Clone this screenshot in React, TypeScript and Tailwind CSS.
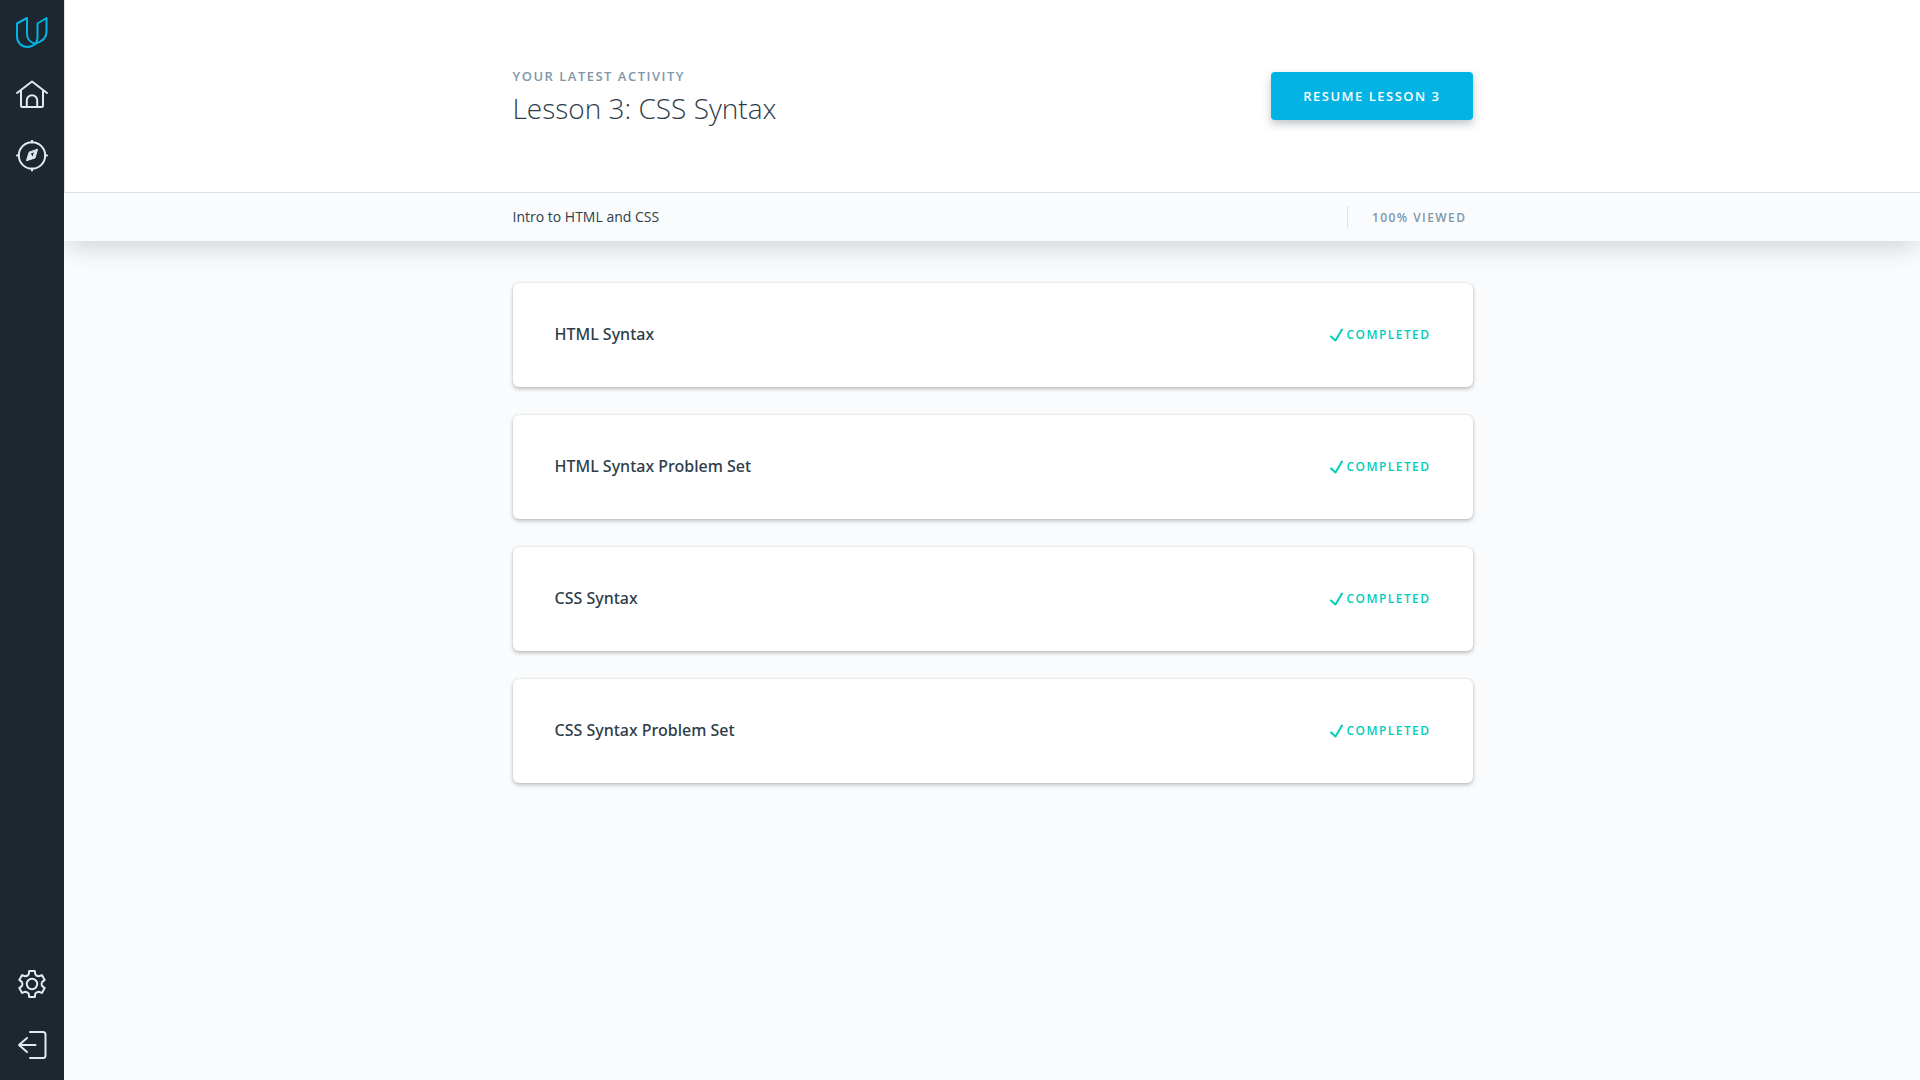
import type { ReactNode } from "react";

const lessons = [
  "HTML Syntax",
  "HTML Syntax Problem Set",
  "CSS Syntax",
  "CSS Syntax Problem Set",
];

function NavIcon({ label, children }: { label: string; children: ReactNode }) {
  return (
    <a href="#" aria-label={label} className="flex size-8 items-center justify-center text-[#e3e9ec]">
      <svg viewBox="0 0 32 32" className="size-8" fill="none" stroke="currentColor" strokeWidth="2" strokeLinecap="round" strokeLinejoin="round" aria-hidden="true">
        {children}
      </svg>
    </a>
  );
}

function Logo() {
  return (
    <a href="#" aria-label="Udacity" className="flex size-8 items-center justify-center text-[#02b3e4]">
      <svg viewBox="0 0 32 32" className="size-8" fill="none" stroke="currentColor" strokeWidth="2" strokeLinejoin="round" aria-hidden="true">
        <path d="M11 2 1 7.500V20.500c0 6 4.500 10.500 10.500 10.500 3.200 0 5.800-1.200 8-3.200C14.500 26.800 11 23 11 18Z" />
        <path d="M21.500 7.500 30.500 2V16c0 5.500-3.500 9.300-11 11.800 1.200-1.700 2-4 2-6.500Z" />
      </svg>
    </a>
  );
}

function Sidebar() {
  return (
    <nav aria-label="Main" className="relative z-10 flex w-16 shrink-0 flex-col items-center justify-between bg-[#1d272f] pt-4 pb-[19px]">
      <div className="flex flex-col gap-[30px]">
        <Logo />
        <NavIcon label="Home">
          <path d="M1 15 16 3.500 31 15" />
          <path d="M5 13v14.500c0 1 .5 1.500 1.500 1.500h19c1 0 1.500-.5 1.500-1.500V13" />
          <path d="M10.800 29v-6.500a5.200 5.200 0 0 1 10.400 0V29" />
        </NavIcon>
        <NavIcon label="Catalog">
          <circle cx="16" cy="15.500" r="13.200" />
          <path d="M16 .5v2M16 28.500v2M1 15.500h2M29 15.500h2" />
          <path fill="currentColor" fillRule="evenodd" strokeWidth="1" d="M21.500 9.500 19 18l-8.500 2.700 2.500-8.200Zm-7.200 4.200 2.400 3.600 2-5.600Z" />
        </NavIcon>
      </div>
      <div className="flex flex-col gap-[29px]">
        <NavIcon label="Settings">
          <circle cx="16" cy="16" r="5.200" />
          <path d="M13.200 3H18.800L19.300 6.400Q20.500 8.200 22.700 8.300L25.900 7.100 28.700 11.900 26 14.100Q25 16 26 17.900L28.700 20.100 25.900 24.900 22.700 23.700Q20.500 23.800 19.300 25.600L18.800 29H13.200L12.700 25.600Q11.500 23.800 9.300 23.700L6.100 24.900 3.300 20.100 6 17.900Q7 16 6 14.100L3.300 11.900 6.100 7.100 9.300 8.300Q11.500 8.200 12.700 6.400Z" />
        </NavIcon>
        <NavIcon label="Sign out">
          <path d="M14 3h13c1.600 0 2.500.9 2.500 2.500v21c0 1.600-.9 2.500-2.500 2.500H14" />
          <path d="M19.500 16H3M11 9l-8 7 8 7" />
        </NavIcon>
      </div>
    </nav>
  );
}

function LessonCard({ title }: { title: string }) {
  return (
    <li className="flex h-[104px] items-center justify-between rounded-md bg-white px-[42px] shadow-[0_2px_4px_rgba(0,0,0,0.24),0_0_2px_rgba(0,0,0,0.12)]">
      <h2 className="pb-0.5 font-['Noto_Sans','Open_Sans',sans-serif] text-base leading-6 font-medium text-[#2e3d49]">{title}</h2>
      <p className="flex items-center gap-1 text-xs leading-6 font-semibold tracking-[0.12em] text-[#02ccba]">
        <svg viewBox="0 0 13 14" className="h-3.5 w-[13px]" fill="none" stroke="currentColor" strokeWidth="2" strokeLinecap="round" strokeLinejoin="round" aria-hidden="true">
          <path d="m1 8.500 4.500 4L12 1.500" />
        </svg>
        COMPLETED
      </p>
    </li>
  );
}

export default function App() {
  return (
    <div className="flex min-h-screen bg-[#fafbfc] font-['Open_Sans',sans-serif]">
      <Sidebar />
      <main className="min-w-0 flex-1">
        <header className="relative z-10 border-b border-l border-[#dbe2e8] bg-white">
          <div className="mx-auto flex h-48 max-w-[960px] items-center justify-between">
            <div className="pt-1">
              <p className="text-[13px] leading-5 font-semibold tracking-[0.115em] text-[#7d97ad]">YOUR LATEST ACTIVITY</p>
              <h1 className="text-[28px] leading-11 font-light text-[#2e3d49]">Lesson 3: CSS Syntax</h1>
            </div>
            <button type="button" className="h-12 rounded bg-[#02b3e4] px-8 pt-0.5 text-[13px] font-semibold tracking-[0.115em] text-white shadow-[0_4px_8px_rgba(46,61,73,0.3)]">
              RESUME LESSON 3
            </button>
          </div>
        </header>
        <div className="border-l border-transparent bg-[#fafbfc] shadow-[0_12px_24px_-4px_rgba(0,0,0,0.15)]">
          <div className="mx-auto flex h-12 max-w-[960px] items-center justify-between">
            <a href="#" className="text-sm leading-6 text-[#2e3d49]">Intro to HTML and CSS</a>
            <p className="border-l border-[#dbe2e8] pt-0.5 pr-1.5 pl-6 text-xs leading-5 font-semibold tracking-[0.12em] text-[#7d97ad]">100% VIEWED</p>
          </div>
        </div>
        <div className="border-l border-transparent pt-[42px] pb-10">
          <ul className="mx-auto flex max-w-[960px] flex-col gap-7">
            {lessons.map((title) => (
              <LessonCard key={title} title={title} />
            ))}
          </ul>
        </div>
      </main>
    </div>
  );
}
